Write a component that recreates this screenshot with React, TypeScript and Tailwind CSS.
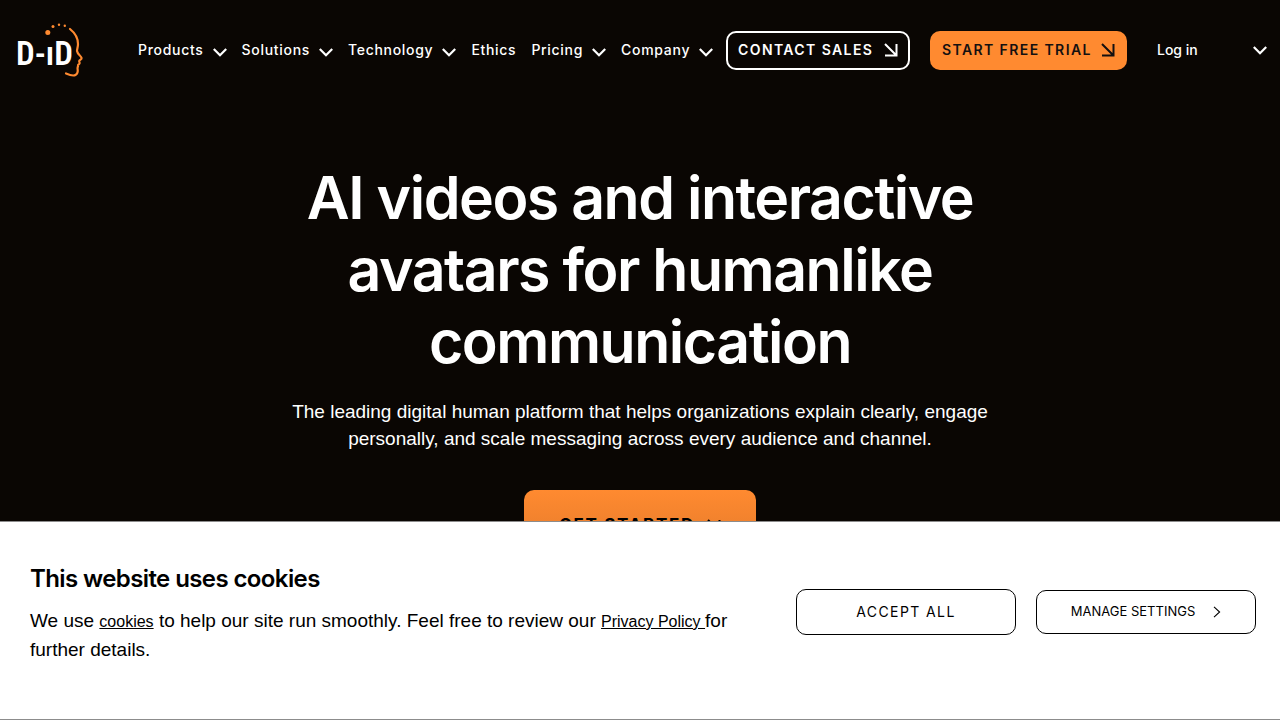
import React from 'react';

const navItems = [
  { label: 'Products', menu: true },
  { label: 'Solutions', menu: true },
  { label: 'Technology', menu: true },
  { label: 'Ethics', menu: false },
  { label: 'Pricing', menu: true },
  { label: 'Company', menu: true }
];

function Chevron({ className = '' }: { className?: string }) {
  return (
    <svg aria-hidden="true" viewBox="0 0 14 9" className={`w-3.5 h-[9px] shrink-0 ${className}`} fill="none" stroke="currentColor" strokeWidth="2.2">
      <path d="M0.8 1 L7 7.2 L13.2 1" />
    </svg>
  );
}

function DiagonalArrow({ className = '' }: { className?: string }) {
  return (
    <svg aria-hidden="true" viewBox="0 0 14 14" className={`w-3.5 h-3.5 shrink-0 ${className}`} fill="none" stroke="currentColor" strokeWidth="2">
      <path d="M1 1 L12 12 M12.5 1 V12.5 H1" />
    </svg>
  );
}

function Logo() {
  return (
    <svg viewBox="0 0 68 56" className="w-[68px] h-14" role="img" aria-label="D-iD">
      <text x="-1" y="43" fill="#fff" fontSize="33" fontWeight="600" fontFamily="'Liberation Sans Narrow', 'Roboto Condensed', 'Open Sans Condensed', Roboto, sans-serif">
        D-ıD
      </text>
      <g fill="#ff8a30">
        <circle cx="30.8" cy="10.6" r="2.5" />
        <circle cx="36" cy="4.5" r="1.5" />
        <circle cx="42" cy="2.8" r="1.2" />
        <circle cx="47.8" cy="3.8" r="1.2" />
      </g>
      <path
        d="M53 7 C58 11 61 16 61 22 C61 25 60 27 60 29 C60.5 32 64 34 64.6 36 C65 37.5 62.5 38 62.2 39 C62 40 63 40.6 62.5 41.5 C62.2 42.5 60.8 42.6 61 43.5 C61.3 44.5 60.2 45.6 60.6 47 C61 49 60.4 51.8 58.4 53 C56 54.4 52 52.8 49 51.5"
        fill="none"
        stroke="#ff8a30"
        strokeWidth="2.2"
        strokeLinecap="round"
        strokeLinejoin="round"
      />
    </svg>
  );
}

function Header() {
  return (
    <header className="flex items-center h-[100px] pl-[17px] pr-[13px]">
      <a href="#home" className="shrink-0">
        <Logo />
      </a>
      <nav className="ml-[53px]">
        <ul className="flex items-center gap-[15px] text-sm font-medium tracking-wider">
          {navItems.map((item) => (
            <li key={item.label}>
              <a href={`#${item.label.toLowerCase()}`} className="flex items-center gap-[9px]">
                {item.label}
                {item.menu && <Chevron className="mt-1" />}
              </a>
            </li>
          ))}
        </ul>
      </nav>
      <div className="flex items-center ml-auto">
        <a href="#contact" className="flex items-center justify-between w-[184px] h-[39px] px-2.5 rounded-[10px] border-2 border-white text-sm font-semibold tracking-widest whitespace-nowrap">
          CONTACT SALES
          <DiagonalArrow />
        </a>
        <a href="#trial" className="flex items-center justify-between w-[197px] h-[39px] ml-5 px-3 rounded-[10px] bg-[#ff8a30] text-[#141010] text-sm font-semibold tracking-widest whitespace-nowrap">
          START FREE TRIAL
          <DiagonalArrow />
        </a>
        <button type="button" className="flex items-center justify-between w-[110px] ml-[30px] text-sm font-medium">
          Log in
          <Chevron />
        </button>
      </div>
    </header>
  );
}

function Hero() {
  return (
    <section className="flex flex-col items-center px-6 pt-[62px] text-center">
      <h1 className="max-w-[720px] text-[59px] leading-[72px] font-semibold tracking-tight">
        AI videos and interactive avatars for humanlike communication
      </h1>
      <p className="max-w-[720px] mt-5 font-['Liberation_Sans',sans-serif] text-[19px] leading-[27px]">
        The leading digital human platform that helps organizations explain clearly, engage personally, and scale messaging across every audience and channel.
      </p>
      <a href="#start" className="flex items-center justify-center gap-3 w-[232px] h-[72px] mt-[38px] rounded-[10px] bg-linear-to-b from-[#ff8a30] to-[#e0782a] text-[17px] font-bold tracking-widest text-black">
        GET STARTED
        <DiagonalArrow />
      </a>
    </section>
  );
}

function CookieBanner() {
  return (
    <aside aria-label="Cookies" className="fixed inset-x-0 bottom-0 flex items-start justify-between pt-[41px] pb-[55px] pl-[30px] pr-6 border-y border-[#8c8c8c] bg-white text-black">
      <div className="max-w-[720px]">
        <h2 className="text-2xl leading-8 font-semibold tracking-tight">This website uses cookies</h2>
        <p className="mt-[11px] font-['Liberation_Sans',sans-serif] text-[19px] leading-[29px]">
          We use <a href="#cookies" className="text-base leading-none underline">cookies</a> to help our site run smoothly. Feel free to review our{' '}
          <a href="#privacy" className="text-base leading-none underline">Privacy Policy </a>for further details.
        </p>
      </div>
      <div className="flex items-center gap-5 mt-[26px] shrink-0">
        <button type="button" className="w-[220px] h-[46px] rounded-[10px] border border-black text-sm tracking-widest">
          ACCEPT ALL
        </button>
        <button type="button" className="flex items-center justify-center gap-[18px] w-[220px] h-11 rounded-[10px] border border-black text-[13px]">
          MANAGE SETTINGS
          <svg aria-hidden="true" viewBox="0 0 8 12" className="w-2 h-3" fill="none" stroke="currentColor" strokeWidth="1.1">
            <path d="M1 0.8 L6.6 6 L1 11.2" />
          </svg>
        </button>
      </div>
    </aside>
  );
}

export default function App() {
  return (
    <div className="min-h-screen bg-[#0a0603] font-['Inter',sans-serif] text-white">
      <Header />
      <Hero />
      <CookieBanner />
    </div>
  );
}
